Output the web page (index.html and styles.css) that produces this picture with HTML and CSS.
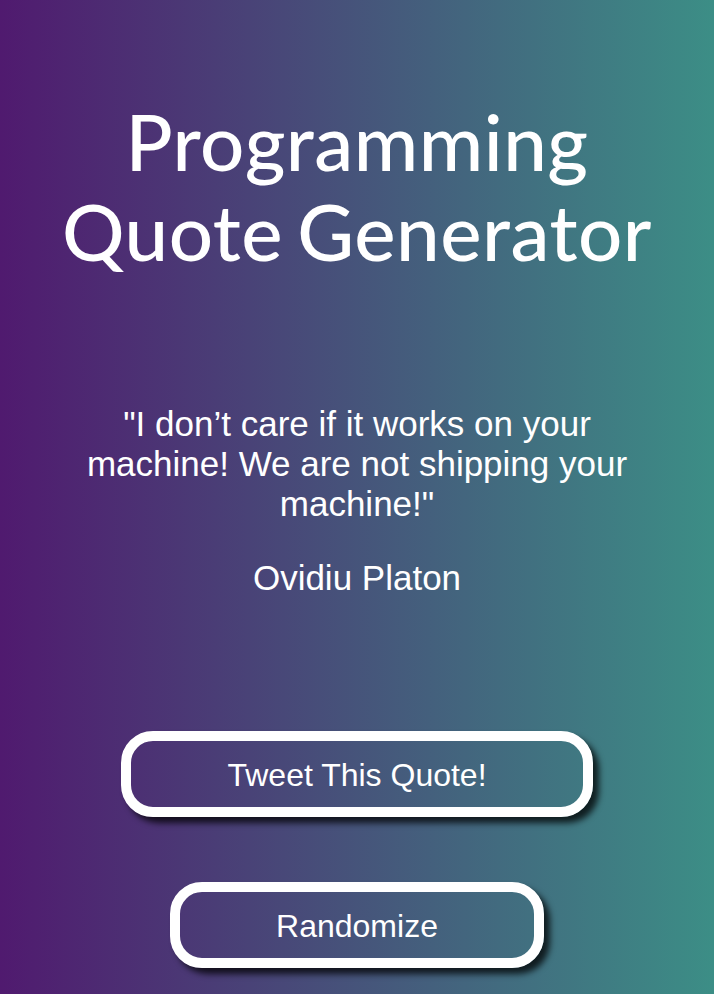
FILE: index.html
```html
<!DOCTYPE html>
<html lang="en">
<head>
<meta charset="utf-8">
<title>Programming Quote Generator</title>
<link rel="stylesheet" href="styles.css">
</head>
<body>
<main class="app">
  <h1 class="title">Programming Quote Generator</h1>
  <section class="quote-box">
    <p class="quote">"I don’t care if it works on your machine! We are not shipping your machine!"</p>
    <p class="author">Ovidiu Platon</p>
  </section>
  <div class="actions">
    <button class="btn btn-tweet" type="button">Tweet This Quote!</button>
    <button class="btn btn-random" type="button">Randomize</button>
  </div>
</main>
</body>
</html>
```

FILE: styles.css
```css
html, body {
  margin: 0;
  padding: 0;
}
body {
  min-height: 994px;
  background: linear-gradient(to right, #501a6f 0%, #3c8e86 100%);
  color: #fff;
  font-family: "Liberation Sans", Arial, sans-serif;
}
.app {
  display: flex;
  flex-direction: column;
  align-items: center;
  text-align: center;
  padding: 96px 40px 0;
}
.title {
  margin: 0;
  font-family: "Lato", "Noto Sans", sans-serif;
  font-weight: 500;
  font-size: 78px;
  line-height: 90px;
  letter-spacing: 0.5px;
  word-spacing: -6px;
  width: 640px;
}
.quote-box {
  margin-top: 128px;
  width: 580px;
}
.quote {
  margin: 0;
  font-size: 35px;
  line-height: 40px;
}
.author {
  margin: 34px 0 0;
  font-size: 35px;
  line-height: 40px;
}
.actions {
  margin-top: 133px;
  display: flex;
  flex-direction: column;
  align-items: center;
  gap: 65px;
}
.btn {
  font-family: "Liberation Sans", Arial, sans-serif;
  font-size: 32px;
  color: #fff;
  background: transparent;
  border: 10px solid #fff;
  border-radius: 32px;
  padding: 2px 96px 0;
  height: 86px;
  box-shadow: 6px 6px 6px rgba(0, 0, 0, 0.75);
  cursor: pointer;
}
```
